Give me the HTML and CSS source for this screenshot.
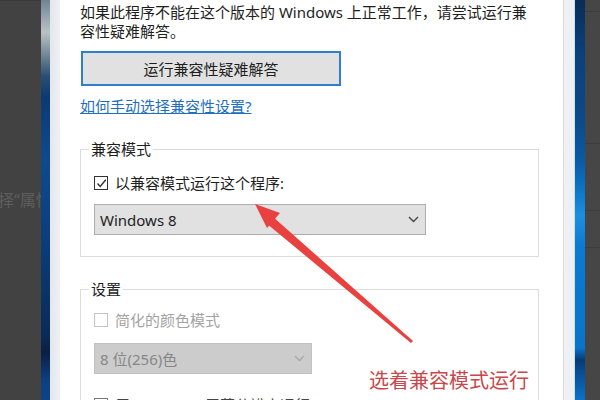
FILE: index.html
```html
<!DOCTYPE html>
<html lang="zh-CN">

<head>
    <meta charset="UTF-8">
    <title>兼容性</title>
    <link rel="stylesheet" href="styles.css">
</head>

<body>
    <div class="side_left">
        <span class="side_text">择“属性</span>
    </div>
    <div class="desk_left"></div>
    <div class="frame_left"></div>

    <div class="dialog">
        <p class="desc">如果此程序不能在这个版本的 Windows 上正常工作，请尝试运行兼<br>容性疑难解答。</p>
        <button class="trouble_btn">运行兼容性疑难解答</button>
        <a class="help_link">如何手动选择兼容性设置?</a>

        <fieldset class="group">
            <legend>兼容模式</legend>
            <label class="check_row">
                <span class="check_box">
                    <svg width="11" height="11" viewBox="0 0 11 11"><polyline points="1.5,5.5 4.2,8.5 9.8,1.8" fill="none" stroke="#333" stroke-width="1.4"/></svg>
                </span>
                <span>以兼容模式运行这个程序:</span>
            </label>
            <div class="select">
                <span>Windows 8</span>
                <svg width="11" height="7" viewBox="0 0 11 7"><path d="M1 1 L5.5 5.5 L10 1" fill="none" stroke="#444" stroke-width="1.4"/></svg>
            </div>
        </fieldset>

        <fieldset class="group group_settings">
            <legend>设置</legend>
            <label class="check_row disabled">
                <span class="check_box"></span>
                <span>简化的颜色模式</span>
            </label>
            <div class="select select_small disabled">
                <span>8 位(256)色</span>
                <svg width="11" height="7" viewBox="0 0 11 7"><path d="M1 1 L5.5 5.5 L10 1" fill="none" stroke="#a8a8a8" stroke-width="1.4"/></svg>
            </div>
            <label class="check_row last_row">
                <span class="check_box"></span>
                <span>用 640 x 480 屏幕分辨率运行</span>
            </label>
        </fieldset>
    </div>

    <div class="frame_right"></div>
    <div class="desk_right"></div>
    <div class="side_right"></div>

    <!-- 红色箭头标注 -->
    <svg class="arrow" width="600" height="400" viewBox="0 0 600 400">
        <polygon points="411,343 413,341 272,216 266,223" fill="#e8413f"/>
        <polygon points="255,204 280,213 267,228" fill="#e8413f"/>
    </svg>
    <div class="note">选着兼容模式运行</div>
</body>

</html>
```

FILE: styles.css
```css
* {
    margin: 0;
    padding: 0;
    box-sizing: border-box;
}

body {
    width: 600px;
    height: 400px;
    overflow: hidden;
    display: flex;
    position: relative;
    font-family: "Noto Sans", "Noto Sans CJK SC", sans-serif;
    background: #ffffff;
}

.side_left {
    width: 41px;
    background: #424242;
    overflow: hidden;
    padding-top: 189px;
    border-top: 1px solid #3a3a3a;
}

.side_text {
    display: block;
    margin-left: -2px;
    white-space: nowrap;
    font-size: 16px;
    line-height: 20px;
    color: #5e5e5e;
}

.desk_left {
    width: 9px;
    background: linear-gradient(to bottom, #6f8494 0, #b8c2c6 8%, #7d8f9c 13%, #2a4f74 19%, #0c3a70 24%, #0f4a8c 40%, #0c3e7a 60%, #0a2a56 84%, #0b1f42 88%, #0d3f80 95%, #0d4584 100%);
}

.frame_left {
    width: 10px;
    background: linear-gradient(to right, #e3e6eb, #eef0f4);
}

.dialog {
    width: 503px;
    background: #ffffff;
    padding-left: 20px;
    color: #1e1e1e;
    font-size: 15px;
}

.desc {
    margin-top: 3px;
    line-height: 19px;
    white-space: nowrap;
}

.trouble_btn {
    display: block;
    margin: 10px 0 0 1px;
    width: 260px;
    height: 35px;
    background: #e1e1e1;
    border: 2px solid #2f7fcc;
    font-family: inherit;
    font-size: 15px;
    color: #1e1e1e;
}

.help_link {
    display: block;
    margin-top: 11px;
    line-height: 18px;
    color: #1f6fbf;
    text-decoration: underline;
}

.group {
    width: 459px;
    margin-top: 25px;
    border: 1px solid #dcdcdc;
    padding: 0 0 21px 13px;
}

.group legend {
    margin-left: -5px;
    padding: 0 2px;
    line-height: 18px;
}

.group_settings {
    margin-top: 23px;
    padding-bottom: 0;
}

.check_row {
    display: flex;
    align-items: center;
    gap: 7px;
    margin-top: 16px;
    line-height: 18px;
}

.check_box {
    width: 14px;
    height: 14px;
    border: 1px solid #333333;
    display: flex;
    align-items: center;
    justify-content: center;
}

.check_row.disabled {
    margin-top: 13px;
    color: #a3a3a3;
}

.check_row.disabled .check_box {
    border-color: #c4c4c4;
}

.select {
    margin-top: 12px;
    width: 332px;
    height: 31px;
    background: #e1e1e1;
    border: 1px solid #adadad;
    display: flex;
    align-items: center;
    justify-content: space-between;
    padding: 0 6px 0 5px;
}

.select_small {
    margin-top: 14px;
    width: 218px;
}

.select.disabled {
    background: #cccccc;
    border-color: #c2c2c2;
    color: #878787;
}

.last_row {
    margin-top: 22px;
    color: #444444;
}

.last_row .check_box {
    border-color: #777777;
}

.frame_right {
    width: 12px;
    background: #eef0f4;
    border-left: 1px solid #dadada;
    border-right: 1px solid #bfe3f2;
}

.desk_right {
    width: 10px;
    background: linear-gradient(to bottom, #0a2c56 0, #0b3f78 12%, #0c4a8a 30%, #0a5aa6 40%, #0b70c0 46%, #1c8ee2 54%, #0a7ad2 62%, #0a74cc 87%, #063a74 90%, #0a4c94 93%, #0a72c8 100%);
}

.side_right {
    flex: 1;
    background: #464646;
    background-image: linear-gradient(to bottom, transparent 11px, #3c3c3c 11px, #3c3c3c 12px, transparent 12px, transparent 143px, #3b3b3b 143px, #3b3b3b 144px, transparent 144px, transparent 210px, #3d3d3d 210px, #3d3d3d 211px, transparent 211px, transparent 247px, #3d3d3d 247px, #3d3d3d 248px, transparent 248px);
}

.arrow {
    position: absolute;
    left: 0;
    top: 0;
    pointer-events: none;
}

.note {
    position: absolute;
    left: 369px;
    top: 368px;
    font-size: 20px;
    line-height: 26px;
    color: #c9474b;
    white-space: nowrap;
}
```
